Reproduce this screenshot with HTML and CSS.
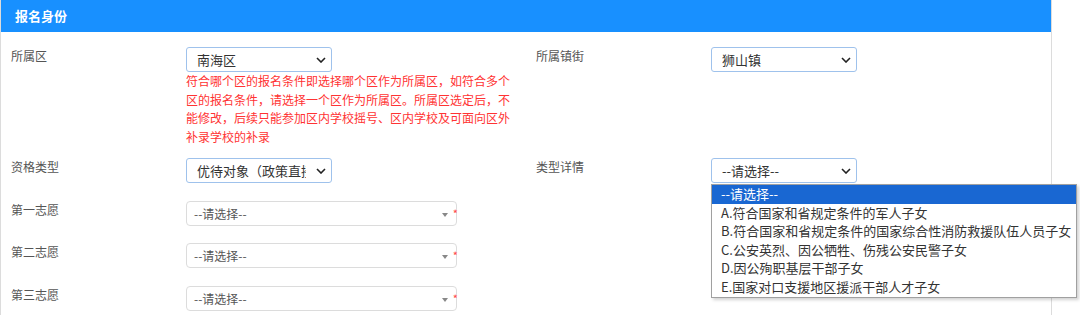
FILE: index.html
```html
<!DOCTYPE html>
<html>
  <head>
    <title>报名身份</title>
    <link rel="stylesheet" href="styles.css">
  </head>
  <body>
    <div class="panel">
      <div class="panel-head">报名身份</div>
      <div class="panel-body">
        <div class="form-row first-row">
          <div class="form-col">
            <div class="form-label">所属区</div>
            <div class="form-field">
              <div class="select">
                <span class="select-text">南海区</span>
                <svg class="chevron" width="10" height="6" viewBox="0 0 10 6"><polyline points="1,1 5,5 9,1" fill="none" stroke="#222" stroke-width="1.6"/></svg>
              </div>
              <div class="hint">符合哪个区的报名条件即选择哪个区作为所属区，如符合多个区的报名条件，请选择一个区作为所属区。所属区选定后，不能修改，后续只能参加区内学校摇号、区内学校及可面向区外补录学校的补录</div>
            </div>
          </div>
          <div class="form-col">
            <div class="form-label">所属镇街</div>
            <div class="form-field">
              <div class="select">
                <span class="select-text">狮山镇</span>
                <svg class="chevron" width="10" height="6" viewBox="0 0 10 6"><polyline points="1,1 5,5 9,1" fill="none" stroke="#222" stroke-width="1.6"/></svg>
              </div>
            </div>
          </div>
        </div>

        <div class="form-row">
          <div class="form-col">
            <div class="form-label">资格类型</div>
            <div class="form-field">
              <div class="select">
                <span class="select-text">优待对象（政策直接照顾类）</span>
                <svg class="chevron" width="10" height="6" viewBox="0 0 10 6"><polyline points="1,1 5,5 9,1" fill="none" stroke="#222" stroke-width="1.6"/></svg>
              </div>
            </div>
          </div>
          <div class="form-col">
            <div class="form-label">类型详情</div>
            <div class="form-field">
              <div class="select open">
                <span class="select-text">--请选择--</span>
                <svg class="chevron" width="10" height="6" viewBox="0 0 10 6"><polyline points="1,1 5,5 9,1" fill="none" stroke="#222" stroke-width="1.6"/></svg>
                <div class="option-list">
                  <div class="option selected">--请选择--</div>
                  <div class="option">A.符合国家和省规定条件的军人子女</div>
                  <div class="option">B.符合国家和省规定条件的国家综合性消防救援队伍人员子女</div>
                  <div class="option">C.公安英烈、因公牺牲、伤残公安民警子女</div>
                  <div class="option">D.因公殉职基层干部子女</div>
                  <div class="option">E.国家对口支援地区援派干部人才子女</div>
                </div>
              </div>
            </div>
          </div>
        </div>

        <div class="form-row">
          <div class="form-col">
            <div class="form-label">第一志愿</div>
            <div class="form-field">
              <div class="combo">
                <span class="combo-text">--请选择--</span>
                <span class="caret"></span>
                <span class="required">*</span>
              </div>
            </div>
          </div>
        </div>

        <div class="form-row">
          <div class="form-col">
            <div class="form-label">第二志愿</div>
            <div class="form-field">
              <div class="combo">
                <span class="combo-text">--请选择--</span>
                <span class="caret"></span>
                <span class="required">*</span>
              </div>
            </div>
          </div>
        </div>

        <div class="form-row">
          <div class="form-col">
            <div class="form-label">第三志愿</div>
            <div class="form-field">
              <div class="combo">
                <span class="combo-text">--请选择--</span>
                <span class="caret"></span>
                <span class="required">*</span>
              </div>
            </div>
          </div>
        </div>
      </div>
    </div>
  </body>
</html>
```

FILE: styles.css
```css
body {
  margin: 0;
  font-family: "Noto Sans CJK SC", "Noto Sans", sans-serif;
  background: #fff;
}
.panel {
  width: 1050px;
  border-left: 1px solid #dcdcdc;
  border-right: 1px solid #dcdcdc;
  min-height: 315px;
}
.panel-head {
  height: 32px;
  line-height: 32px;
  padding-left: 14px;
  background: #1890ff;
  color: #fff;
  font-size: 13px;
  font-weight: bold;
}
.panel-body {
  padding-top: 15px;
}
.form-row {
  display: flex;
  margin-bottom: 17.5px;
}
.form-row.first-row {
  margin-bottom: 12px;
}
.form-col {
  display: flex;
  width: 525px;
  padding-left: 10px;
  box-sizing: border-box;
}
.form-label {
  width: 175px;
  flex: none;
  font-size: 12px;
  line-height: 18px;
  color: #555;
}
.form-field {
  flex: 1;
}
.select {
  position: relative;
  display: flex;
  align-items: center;
  width: 146px;
  height: 25px;
  box-sizing: border-box;
  border: 1px solid #9fc2ec;
  border-radius: 3px;
  padding: 0 5px 0 10px;
  background: #fff;
}
.select-text {
  flex: 1;
  overflow: hidden;
  white-space: nowrap;
  font-size: 13px;
  color: #333;
  margin-right: 10px;
}
.chevron {
  flex: none;
}
.hint {
  width: 328px;
  font-size: 12px;
  line-height: 18.5px;
  color: #f33;
}
.option-list {
  position: absolute;
  top: 25px;
  left: -1px;
  width: 366px;
  box-sizing: border-box;
  border: 1px solid #a0a0a0;
  background: #fff;
  box-shadow: 2px 2px 3px rgba(0, 0, 0, 0.18);
  z-index: 2;
}
.option {
  height: 18.6px;
  line-height: 18.6px;
  padding-left: 9px;
  font-size: 13px;
  color: #333;
  white-space: nowrap;
}
.option.selected {
  background: #1967d2;
  color: #fff;
}
.combo {
  position: relative;
  display: flex;
  align-items: center;
  width: 271px;
  height: 25px;
  box-sizing: border-box;
  border: 1px solid #dcdcdc;
  border-radius: 4px;
  padding-left: 7px;
}
.combo-text {
  font-size: 12px;
  color: #555;
}
.caret {
  position: absolute;
  right: 8px;
  top: 11px;
  border-left: 3px solid transparent;
  border-right: 3px solid transparent;
  border-top: 4px solid #888;
}
.required {
  position: absolute;
  right: -2px;
  top: 4px;
  font-size: 11px;
  line-height: 14px;
  color: #f44;
}
```
